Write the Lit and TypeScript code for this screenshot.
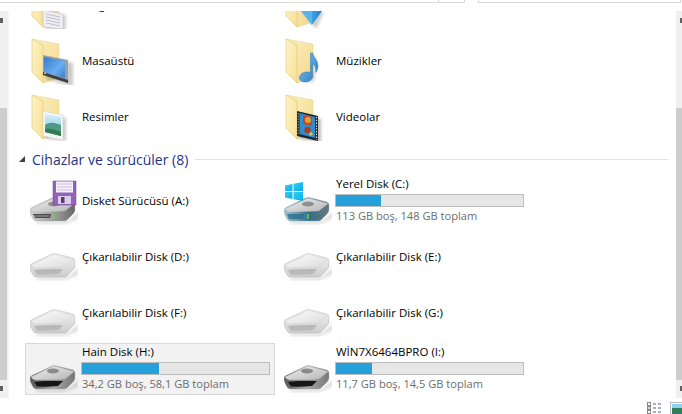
import { LitElement, html, css, svg } from "lit";
import { customElement } from "lit/decorators.js";

const defs = html`<svg class="defs" aria-hidden="true">
  <defs>
    <linearGradient id="fb" x1="0" y1="0" x2="1" y2="1"><stop offset="0" stop-color="#fdf2c0"/><stop offset="1" stop-color="#f2d78c"/></linearGradient>
    <linearGradient id="ff" x1="0" y1="0" x2="1" y2="0.6"><stop offset="0" stop-color="#fdf4c8"/><stop offset="1" stop-color="#f8e39c"/></linearGradient>
    <linearGradient id="scr" x1="0" y1="0" x2="1" y2="1"><stop offset="0" stop-color="#3479cf"/><stop offset=".6" stop-color="#69aef0"/><stop offset="1" stop-color="#3a7bd0"/></linearGradient>
    <linearGradient id="sky" x1="0" y1="0" x2="0" y2="1"><stop offset="0" stop-color="#d2eef8"/><stop offset="1" stop-color="#86c8de"/></linearGradient>
    <linearGradient id="arr" x1="0" y1="0" x2="1" y2="0"><stop offset="0" stop-color="#6cc1f2"/><stop offset="1" stop-color="#1b7fd2"/></linearGradient>
    <linearGradient id="note" x1="0" y1="0" x2="1" y2="1"><stop offset="0" stop-color="#7cc0ec"/><stop offset="1" stop-color="#2a7fc6"/></linearGradient>
    <linearGradient id="top" x1="0" y1="0" x2="1" y2="1"><stop offset="0" stop-color="#fcfcfc"/><stop offset="1" stop-color="#dcdcdc"/></linearGradient>
    <linearGradient id="topD" x1="0" y1="0" x2="1" y2="1"><stop offset="0" stop-color="#f0f0f0"/><stop offset="1" stop-color="#b4b4b4"/></linearGradient>
    <linearGradient id="frW" x1="0" y1="0" x2="0" y2="1"><stop offset="0" stop-color="#f6f6f6"/><stop offset="1" stop-color="#cccccc"/></linearGradient>
    <linearGradient id="frK" x1="0" y1="0" x2="1" y2="0"><stop offset="0" stop-color="#555"/><stop offset=".5" stop-color="#a8a8a8"/><stop offset="1" stop-color="#777"/></linearGradient>
    <linearGradient id="frC" x1="0" y1="0" x2="1" y2="0"><stop offset="0" stop-color="#9cc6d0"/><stop offset=".55" stop-color="#2f6f86"/><stop offset="1" stop-color="#6a787e"/></linearGradient>
    <linearGradient id="frA" x1="0" y1="0" x2="1" y2="0"><stop offset="0" stop-color="#cfcfcf"/><stop offset=".7" stop-color="#8c8c8c"/><stop offset="1" stop-color="#666"/></linearGradient>
    <linearGradient id="win" x1="0" y1="0" x2="1" y2="1"><stop offset="0" stop-color="#35cdf5"/><stop offset="1" stop-color="#08aee8"/></linearGradient>
    <filter id="bl" x="-30%" y="-30%" width="160%" height="160%"><feGaussianBlur stdDeviation="1.4"/></filter>
    <filter id="soft" x="-5%" y="-5%" width="110%" height="110%"><feGaussianBlur stdDeviation=".35"/></filter>
  </defs>
</svg>`;

const docOverlay = svg`
  <polygon points="15,31 36,34 36,50 15,48" fill="#000" opacity=".18" filter="url(#bl)"/>
  <polygon points="13,29 33,33 33,48 13,46" fill="#eeeef2" stroke="#b9b9c4" stroke-width=".5"/>
  <path d="M16 33l14 3M16 36l14 3M16 39l14 3M16 42l14 3" stroke="#b4b4c0" stroke-width=".8"/>`;
const screenOverlay = svg`
  <polygon points="16,21 43,26 43,50 16,42" fill="#000" opacity=".2" filter="url(#bl)"/>
  <polygon points="13,18 38,23 38,46 13,38" fill="#9a9fa5"/>
  <polygon points="14,20 35,24 35,41 14,35" fill="url(#scr)"/>
  <polygon points="13,38 38,46 38,43 13,35" fill="#3c4046"/>
  <rect x="14" y="35.500" width="2" height="1.600" fill="#d6c24a"/>`;
const photoOverlay = svg`
  <polygon points="16,21 36,25 36,48 16,46" fill="#000" opacity=".2" filter="url(#bl)"/>
  <polygon points="13,18 33,22 33,47 13,43" fill="#f4f6f6" stroke="#c4c8c8" stroke-width=".4"/>
  <polygon points="15,21 31,24 31,43 15,39" fill="url(#sky)"/>
  <path d="M15 32c4-3 8-3 16 0v11l-16-4z" fill="#4f9a86"/>
  <path d="M15 36c5-1 10 1 16 3v4l-16-4z" fill="#2f7d4e"/>`;
const arrowOverlay = svg`
  <polygon points="19,31 40,31 32,48" fill="#000" opacity=".2" filter="url(#bl)"/>
  <polygon points="17,28 22,24 33,24 38,30 28,44" fill="url(#arr)"/>
  <polygon points="17,30 28,44 28,30" fill="#58b4ee"/>`;
const noteOverlay = svg`
  <path d="M28 17v22a5.500 4.500 0 1 1-3-4V17z" fill="#000" opacity=".18" filter="url(#bl)" transform="translate(3 2)"/>
  <path d="M26.500 16h2.200c.4 4 5 6.500 5.300 12.500 .1 3-1 5.500-2.300 7 .4-3.500-.2-7-3.200-9v12.500c0 3.500-3.500 6-7.500 6-3.400 0-5.500-1.800-5.500-4.300 0-3.300 3.600-5.700 7.500-5.700 1.300 0 2.500.2 3.500.7z" fill="url(#note)" stroke="#2a74b6" stroke-width=".5"/>`;
const filmOverlay = svg`
  <polygon points="16,21 37,26 37,50 16,46" fill="#000" opacity=".25" filter="url(#bl)"/>
  <polygon points="13,18 34,23 34,48 13,43" fill="#23262b"/>
  <polygon points="15.500,20 31,24 31,45 15.500,41" fill="#2b8fd0"/>
  <polygon points="19,22 28,24 28,33 19,31" fill="#c6462a"/>
  <circle cx="24" cy="27" r="3" fill="#e0a230"/>
  <circle cx="23.500" cy="37" r="3.200" fill="#a63d22"/>
  <circle cx="27" cy="41" r="1.800" fill="#e8c03c"/>
  <path d="M32.500 24v23" stroke="#e6e6e6" stroke-width="1.200" stroke-dasharray="1.300 1.500"/>
  <path d="M14.200 20v22" stroke="#cfcfcf" stroke-width=".8" stroke-dasharray="1.300 1.500"/>`;

function folder(overlay: unknown) {
  return html`<svg class="ico" viewBox="0 0 48 48" width="48" height="48">
    <polygon points="2,2 29,7 29,41 13,46" fill="url(#fb)" stroke="#e8cf8c" stroke-width=".5"/>
    <polygon points="2,2 13,8 13,46 2,35" fill="url(#ff)" stroke="#e0c478" stroke-width=".6"/>
    ${overlay}
  </svg>`;
}

type Kind = "empty" | "dark" | "sys" | "floppy";

const BODY = "M0 33Q0 31 3 30L22 21Q24 20 27 21L43 25Q45 26 45 28L45 33Q45 35 43 37L37 43Q36 44 34 44L7 44Q4 44 3 42L1 38Q0 36 0 33Z";
const TOP = "M1 32L23 21.500Q24 21 26 21.500L44 26.500L36 33Q35 34 33 34L6 35Q3 35 1 32Z";

function drive(kind: Kind) {
  const topFill = kind === "empty" ? "url(#top)" : "url(#topD)";
  const front = kind === "empty" ? "url(#frW)" : kind === "dark" ? "url(#frK)" : kind === "sys" ? "url(#frC)" : "url(#frA)";
  return svg`
    <polygon points="4,44 38,44 50,34 48,42 36,47 8,47" fill="#000" opacity=".13" filter="url(#bl)"/>
    <g filter="url(#soft)">
      <path d="${BODY}" fill="${front}" stroke="#a8a8a8" stroke-width=".4"/>
      <path d="${TOP}" fill="${topFill}" stroke="#c8c8c8" stroke-width=".4"/>
      ${kind === "empty"
        ? svg`<path d="M4 37Q18 35.500 33 36L29 41Q18 42 7 41.500Z" fill="#b8b8b8"/>`
        : kind === "dark"
          ? svg`<path d="M4 37Q18 35 33 36L28 41Q18 42 7 41.500Z" fill="#161616"/>
                <ellipse cx="23" cy="26" rx="6" ry="2.500" fill="#8a8a8a"/>`
          : svg`
            <ellipse cx="24" cy="27" rx="6" ry="2.600" fill="#8f8f8f"/>
            <rect x="23" y="37" width="1.600" height="5" fill="#6fd23a"/>
            ${kind === "floppy"
              ? svg`<polygon points="3,37 21,37 20,41 5,41" fill="#4b4b4b"/><path d="M4 39h15" stroke="#cfcfcf" stroke-width=".7"/>`
              : svg`<polygon points="3,37 20,37 19,42 5,42" fill="#2a6c8c" opacity=".75"/>`}
          `}
    </g>`;
}

const floppy = svg`
  <rect x="23" y="4" width="23" height="24" fill="#9263b6" stroke="#6d4290" stroke-width=".5"/>
  <rect x="26" y="4.500" width="17" height="11" fill="#f6f1fa"/>
  <path d="M27 7h15M27 10h15M27 13h15" stroke="#c2aed6" stroke-width=".8"/>
  <rect x="28" y="19" width="13" height="8" fill="#dccde9"/>
  <rect x="31" y="20" width="3.500" height="6" fill="#5d3a7d"/>`;

const winLogo = svg`
  <polygon points="1,8.500 8.500,7 8.500,14 1,14" fill="url(#win)"/>
  <polygon points="9.500,6.800 19,5 19,14 9.500,14" fill="url(#win)"/>
  <polygon points="1,15 8.500,15 8.500,22 1,20.500" fill="url(#win)"/>
  <polygon points="9.500,15 19,15 19,24 9.500,22.200" fill="url(#win)"/>`;

function driveIcon(kind: Kind) {
  return html`<svg class="ico" viewBox="0 0 48 48" width="48" height="48">
    ${drive(kind)}
    ${kind === "floppy" ? floppy : ""}
    ${kind === "sys" ? winLogo : ""}
  </svg>`;
}

const FOLDERS_ROWS: [string, unknown][] = [
  ["Belgeler", docOverlay],
  ["İndirilenler", arrowOverlay],
  ["Masaüstü", screenOverlay],
  ["Müzikler", noteOverlay],
  ["Resimler", photoOverlay],
  ["Videolar", filmOverlay],
];

interface Disk {
  name: string;
  kind: Kind;
  fill?: number;
  info?: string;
  selected?: boolean;
}

const DISKS: Disk[] = [
  { name: "Disket Sürücüsü (A:)", kind: "floppy" },
  { name: "Yerel Disk (C:)", kind: "sys", fill: 24, info: "113 GB boş, 148 GB toplam" },
  { name: "Çıkarılabilir Disk (D:)", kind: "empty" },
  { name: "Çıkarılabilir Disk (E:)", kind: "empty" },
  { name: "Çıkarılabilir Disk (F:)", kind: "empty" },
  { name: "Çıkarılabilir Disk (G:)", kind: "empty" },
  { name: "Hain Disk (H:)", kind: "dark", fill: 41, info: "34,2 GB boş, 58,1 GB toplam", selected: true },
  { name: "WİN7X6464BPRO (I:)", kind: "dark", fill: 19, info: "11,7 GB boş, 14,5 GB toplam" },
];

@customElement("app-root")
export class AppRoot extends LitElement {
  static styles = css`
    :host {
      display: flex;
      flex-direction: column;
      width: 682px;
      height: 414px;
      overflow: hidden;
      background: #fff;
      font-family: "Open Sans", "Noto Sans", sans-serif;
      font-size: 11.5px;
      color: #000;
    }
    .defs { display: block; width: 0; height: 0; }
    .top { display: flex; height: 3px; flex: none; }
    .addr {
      width: 465px;
      border-bottom: 1px solid #d9d9d9;
      border-right: 1px solid #d9d9d9;
      display: flex;
      justify-content: flex-end;
      box-sizing: border-box;
    }
    .addr i { display: block; width: 25px; border-left: 1px solid #d9d9d9; }
    .search {
      width: 203px;
      margin-left: 13px;
      box-sizing: border-box;
      border: 1px solid #d9d9d9;
      border-top: none;
    }
    .body { flex: 1; min-height: 0; display: flex; margin-top: 8px; }
    .sb { flex: none; background: #f0f0f0; overflow: hidden; }
    .sb.left { width: 8px; border-right: 1px solid #f6f6f6; }
    .sb.right { width: 6px; }
    .sbinner { display: flex; flex-direction: column; height: 100%; }
    .thumb { height: 272px; flex: none; background: #cdcdcd; }
    .sb.left .thumb { width: 7px; }
    .end { height: 18px; flex: none; padding-top: 6px; box-sizing: border-box; }
    .up { height: 97px; flex: none; padding-top: 7px; box-sizing: border-box; }
    .chev { width: 3px; height: 5px; background: #606060; }
    .sb.right .chev { margin-left: 4px; width: 2px; }
    .content { flex: 1; min-width: 0; overflow: hidden; padding: 0 8px 0 16px; }
    .scroll { margin-top: -32px; }
    .grid { display: grid; grid-template-columns: repeat(2, 250px); gap: 4px; }
    .tile {
      box-sizing: border-box;
      height: 52px;
      border: 1px solid transparent;
      display: flex;
      align-items: center;
      padding-left: 4px;
      gap: 4px;
    }
    .tile.sel { background: #f2f2f2; border-color: #d9d9d9; }
    .ico { flex: none; display: block; }
    .name { line-height: 16px; white-space: nowrap; color: #000; }
    .text { flex: 1; min-width: 0; margin-right: 4px; }
    .bar {
      height: 13px;
      margin: 2px 0 0 -1px;
      box-sizing: border-box;
      border: 1px solid #bcbcbc;
      background: #e6e6e6;
    }
    .fill { height: 100%; background: #26a0da; }
    .info { line-height: 18px; padding-bottom: 1px; color: #6d6d6d; white-space: nowrap; font-size: 11.1px; }
    .head {
      height: 32px;
      display: flex;
      align-items: center;
      gap: 7px;
      margin-left: -6px;
      color: #1e3287;
      font-size: 14px;
    }
    .tri { flex: none; width: 0; height: 0; border-style: solid; border-width: 0 0 6px 6px; border-color: transparent transparent #404040 transparent; }
    .rule { flex: 1; height: 1px; background: #e2e2e2; }
    .status { flex: none; display: flex; justify-content: flex-end; gap: 8px; overflow: hidden; padding-top: 4px; height: 12px; }
    .status svg { display: block; flex: none; }
  `;

  private tile(d: Disk) {
    return html`<div class="tile ${d.selected ? "sel" : ""}">
      ${driveIcon(d.kind)}
      <div class="text">
        <div class="name">${d.name}</div>
        ${d.info
          ? html`<div class="bar"><div class="fill" style="width:${d.fill}%"></div></div>
              <div class="info">${d.info}</div>`
          : ""}
      </div>
    </div>`;
  }

  render() {
    return html`
      ${defs}
      <div class="top">
        <div class="addr"><i></i></div>
        <div class="search"></div>
      </div>
      <div class="body">
        <div class="sb left">
          <div class="sbinner">
            <div class="up"><div class="chev"></div></div>
            <div class="thumb"></div>
            <div class="end"><div class="chev"></div></div>
          </div>
        </div>
        <div class="content">
          <div class="scroll">
            <div class="grid">
              ${FOLDERS_ROWS.map(
                ([n, o]) => html`<div class="tile">${folder(o)}<div class="text"><div class="name">${n}</div></div></div>`
              )}
            </div>
            <div class="head"><span class="tri"></span><span>Cihazlar ve sürücüler (8)</span><span class="rule"></span></div>
            <div class="grid">${DISKS.map((d) => this.tile(d))}</div>
          </div>
        </div>
        <div class="sb right">
          <div class="sbinner">
            <div class="up"><div class="chev"></div></div>
            <div class="thumb"></div>
            <div class="end"><div class="chev"></div></div>
          </div>
        </div>
      </div>
      <div class="status">
        <svg width="15" height="12" viewBox="0 0 15 12">
          <rect x=".5" y=".5" width="3" height="3" fill="#fff" stroke="#8a8a8a"/>
          <rect x=".5" y="4.500" width="3" height="3" fill="#fff" stroke="#8a8a8a"/>
          <rect x="1.500" y="5.500" width="1" height="1" fill="#d33"/>
          <rect x=".5" y="8.500" width="3" height="3" fill="#fff" stroke="#8a8a8a"/>
          <path d="M6 2h3M11 2h3M6 6h3M11 6h3M6 10h3M11 10h3" stroke="#4f6480" stroke-width="1"/>
        </svg>
        <svg width="12" height="12" viewBox="0 0 12 12">
          <rect x=".5" y=".5" width="13" height="13" fill="#fff" stroke="#aebac4"/>
          <rect x="2" y="2" width="10" height="4" fill="#8fd0ee"/>
          <rect x="2" y="6" width="10" height="6" fill="#2f7d5a"/>
        </svg>
      </div>
    `;
  }
}
